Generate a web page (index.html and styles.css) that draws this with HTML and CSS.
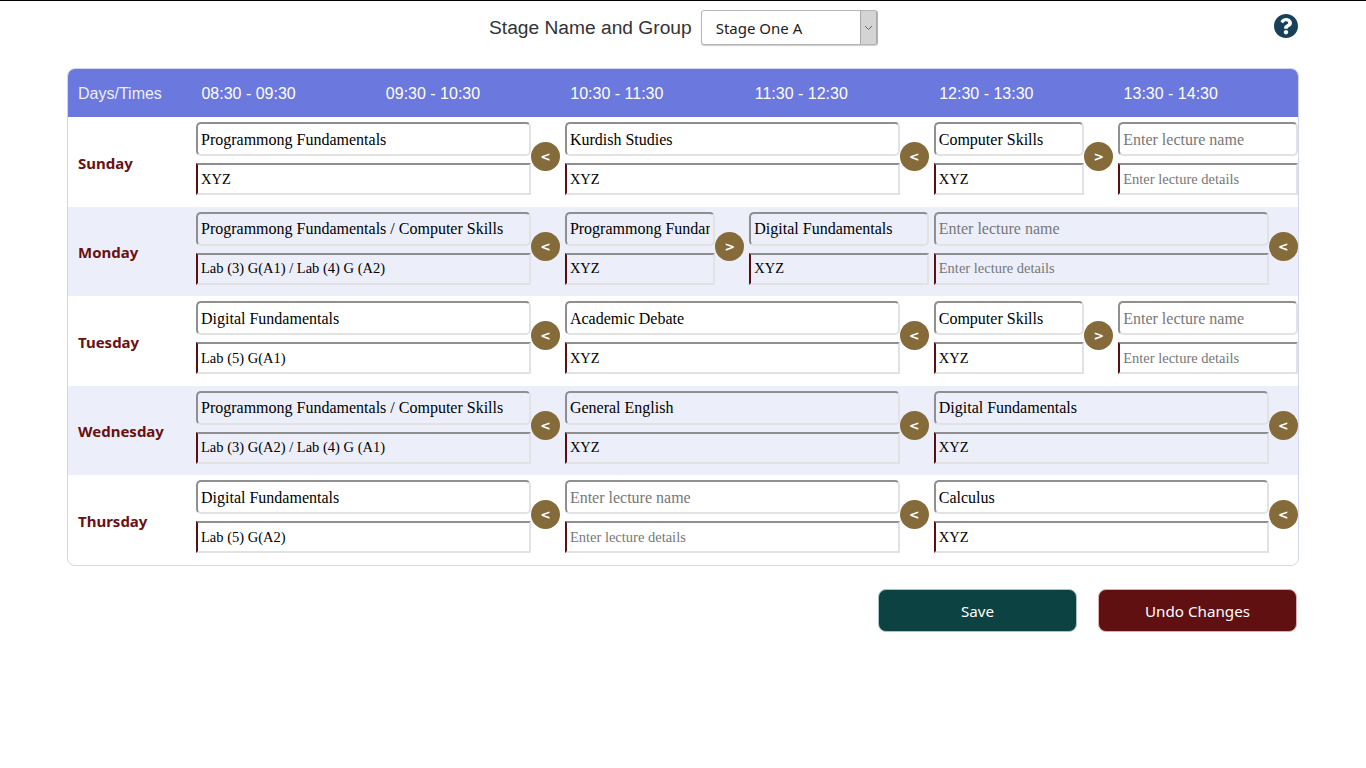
FILE: index.html
```html
<!DOCTYPE html>
<html lang="en">
<head>
    <meta charset="UTF-8">
    <meta name="viewport" content="width=device-width, initial-scale=1.0">
    <title>Schedule</title>
    <link rel="stylesheet" href="styles.css">
</head>
<body>
    <!-- stage picker and help -->
    <div class="topBar">
        <div class="picker">
            <label class="pickerLabel" for="stage">Stage Name and Group</label>
            <div class="selectBox">
                <select id="stage" class="stageSelect">
                    <option>Stage One A</option>
                    <option>Stage One B</option>
                </select>
                <span class="selectArrow">
                    <svg width="9" height="6" viewBox="0 0 9 6"><path d="M1 1l3.5 3.5L8 1" fill="none" stroke="#666" stroke-width="1"/></svg>
                </span>
            </div>
        </div>
        <a class="helpIcon" href="#" aria-label="Help">
            <svg width="24" height="24" viewBox="8 8 496 496"><path fill="#17415a" d="M504 256c0 136.997-111.043 248-248 248S8 392.997 8 256C8 119.083 119.043 8 256 8s248 111.083 248 248zM262.655 90c-54.497 0-89.255 22.957-116.549 63.758-3.536 5.286-2.353 12.415 2.715 16.258l34.699 26.31c5.205 3.947 12.621 3.008 16.665-2.122 17.864-22.658 30.113-35.797 57.303-35.797 20.429 0 45.698 13.148 45.698 32.958 0 14.976-12.363 22.667-32.534 33.976C247.128 238.528 216 254.941 216 296v4c0 6.627 5.373 12 12 12h56c6.627 0 12-5.373 12-12v-1.333c0-28.462 83.186-29.647 83.186-106.667 0-58.002-60.165-102-116.531-102zM256 338c-25.365 0-46 20.635-46 46 0 25.364 20.635 46 46 46s46-20.636 46-46c0-25.365-20.635-46-46-46z"/></svg>
        </a>
    </div>

    <!-- timetable -->
    <div class="schedule">
        <div class="headRow">
            <div class="headDay">Days/Times</div>
            <div class="headTime">08:30 - 09:30</div>
            <div class="headTime">09:30 - 10:30</div>
            <div class="headTime">10:30 - 11:30</div>
            <div class="headTime">11:30 - 12:30</div>
            <div class="headTime">12:30 - 13:30</div>
            <div class="headTime">13:30 - 14:30</div>
        </div>

        <div class="dayRow">
            <div class="dayName">Sunday</div>
            <div class="lecture span2">
                <div class="fields">
                    <input class="lectureName" placeholder="Enter lecture name" value="Programmong Fundamentals">
                    <input class="lectureInfo" placeholder="Enter lecture details" value="XYZ">
                </div>
                <button class="moveBtn">&lt;</button>
            </div>
            <div class="lecture span2">
                <div class="fields">
                    <input class="lectureName" placeholder="Enter lecture name" value="Kurdish Studies">
                    <input class="lectureInfo" placeholder="Enter lecture details" value="XYZ">
                </div>
                <button class="moveBtn">&lt;</button>
            </div>
            <div class="lecture">
                <div class="fields">
                    <input class="lectureName" placeholder="Enter lecture name" value="Computer Skills">
                    <input class="lectureInfo" placeholder="Enter lecture details" value="XYZ">
                </div>
                <button class="moveBtn">&gt;</button>
            </div>
            <div class="lecture">
                <div class="fields">
                    <input class="lectureName" placeholder="Enter lecture name">
                    <input class="lectureInfo" placeholder="Enter lecture details">
                </div>
            </div>
        </div>

        <div class="dayRow">
            <div class="dayName">Monday</div>
            <div class="lecture span2">
                <div class="fields">
                    <input class="lectureName" placeholder="Enter lecture name" value="Programmong Fundamentals / Computer Skills">
                    <input class="lectureInfo" placeholder="Enter lecture details" value="Lab (3) G(A1) / Lab (4) G (A2)">
                </div>
                <button class="moveBtn">&lt;</button>
            </div>
            <div class="lecture">
                <div class="fields">
                    <input class="lectureName" placeholder="Enter lecture name" value="Programmong Fundamentals">
                    <input class="lectureInfo" placeholder="Enter lecture details" value="XYZ">
                </div>
                <button class="moveBtn">&gt;</button>
            </div>
            <div class="lecture">
                <div class="fields">
                    <input class="lectureName" placeholder="Enter lecture name" value="Digital Fundamentals">
                    <input class="lectureInfo" placeholder="Enter lecture details" value="XYZ">
                </div>
            </div>
            <div class="lecture span2">
                <div class="fields">
                    <input class="lectureName" placeholder="Enter lecture name">
                    <input class="lectureInfo" placeholder="Enter lecture details">
                </div>
                <button class="moveBtn">&lt;</button>
            </div>
        </div>

        <div class="dayRow">
            <div class="dayName">Tuesday</div>
            <div class="lecture span2">
                <div class="fields">
                    <input class="lectureName" placeholder="Enter lecture name" value="Digital Fundamentals">
                    <input class="lectureInfo" placeholder="Enter lecture details" value="Lab (5) G(A1)">
                </div>
                <button class="moveBtn">&lt;</button>
            </div>
            <div class="lecture span2">
                <div class="fields">
                    <input class="lectureName" placeholder="Enter lecture name" value="Academic Debate">
                    <input class="lectureInfo" placeholder="Enter lecture details" value="XYZ">
                </div>
                <button class="moveBtn">&lt;</button>
            </div>
            <div class="lecture">
                <div class="fields">
                    <input class="lectureName" placeholder="Enter lecture name" value="Computer Skills">
                    <input class="lectureInfo" placeholder="Enter lecture details" value="XYZ">
                </div>
                <button class="moveBtn">&gt;</button>
            </div>
            <div class="lecture">
                <div class="fields">
                    <input class="lectureName" placeholder="Enter lecture name">
                    <input class="lectureInfo" placeholder="Enter lecture details">
                </div>
            </div>
        </div>

        <div class="dayRow">
            <div class="dayName">Wednesday</div>
            <div class="lecture span2">
                <div class="fields">
                    <input class="lectureName" placeholder="Enter lecture name" value="Programmong Fundamentals / Computer Skills">
                    <input class="lectureInfo" placeholder="Enter lecture details" value="Lab (3) G(A2) / Lab (4) G (A1)">
                </div>
                <button class="moveBtn">&lt;</button>
            </div>
            <div class="lecture span2">
                <div class="fields">
                    <input class="lectureName" placeholder="Enter lecture name" value="General English">
                    <input class="lectureInfo" placeholder="Enter lecture details" value="XYZ">
                </div>
                <button class="moveBtn">&lt;</button>
            </div>
            <div class="lecture span2">
                <div class="fields">
                    <input class="lectureName" placeholder="Enter lecture name" value="Digital Fundamentals">
                    <input class="lectureInfo" placeholder="Enter lecture details" value="XYZ">
                </div>
                <button class="moveBtn">&lt;</button>
            </div>
        </div>

        <div class="dayRow">
            <div class="dayName">Thursday</div>
            <div class="lecture span2">
                <div class="fields">
                    <input class="lectureName" placeholder="Enter lecture name" value="Digital Fundamentals">
                    <input class="lectureInfo" placeholder="Enter lecture details" value="Lab (5) G(A2)">
                </div>
                <button class="moveBtn">&lt;</button>
            </div>
            <div class="lecture span2">
                <div class="fields">
                    <input class="lectureName" placeholder="Enter lecture name">
                    <input class="lectureInfo" placeholder="Enter lecture details">
                </div>
                <button class="moveBtn">&lt;</button>
            </div>
            <div class="lecture span2">
                <div class="fields">
                    <input class="lectureName" placeholder="Enter lecture name" value="Calculus">
                    <input class="lectureInfo" placeholder="Enter lecture details" value="XYZ">
                </div>
                <button class="moveBtn">&lt;</button>
            </div>
        </div>
    </div>

    <div class="actions">
        <button class="actionBtn saveBtn">Save</button>
        <button class="actionBtn undoBtn">Undo Changes</button>
    </div>
</body>
</html>
```

FILE: styles.css
```css
*{
    margin: 0;
    padding: 0;
    box-sizing: border-box;
}

body{
    border-top: 1px solid #000;
    background-color: #fff;
    font-family: "Noto Sans", "Open Sans", sans-serif;
}

.topBar{
    height: 67px;
    padding: 9px 68px 0 489px;
    display: flex;
    justify-content: space-between;
    align-items: flex-start;
}

.picker{
    display: flex;
    align-items: center;
    gap: 9px;
}

.pickerLabel{
    font-family: "Liberation Sans", sans-serif;
    font-size: 19.2px;
    color: #333;
}

.selectBox{
    width: 177px;
    height: 35px;
    display: flex;
    background-color: #fff;
    border: 1px solid #b5b5b5;
    border-radius: 3px;
    box-shadow: 0 1px 1px #ccc;
}

.stageSelect{
    flex: 1;
    min-width: 0;
    appearance: none;
    border: none;
    background: none;
    padding: 0 0 0 14px;
    font-family: "Noto Sans", sans-serif;
    font-size: 15px;
    color: #222;
}

.selectArrow{
    width: 17px;
    display: flex;
    align-items: center;
    justify-content: center;
    background-color: #d4d4d4;
    border-left: 1px solid #a9a9a9;
    border-right: 1px solid #a9a9a9;
}

.helpIcon{
    display: flex;
    margin-top: 4px;
}

.schedule{
    width: 1232px;
    height: 498px;
    margin-left: 67px;
    border: 1px solid #d3d6f2;
    border-radius: 8px;
    overflow: hidden;
}

.headRow,
.dayRow{
    display: grid;
    grid-template-columns: 123px repeat(6, 179.45px);
    column-gap: 5px;
}

.headRow{
    height: 48px;
    padding-top: 2px;
    align-items: center;
    background-color: #6b78dd;
    font-family: "Liberation Sans", sans-serif;
    font-size: 16px;
    color: #fff;
}

.headDay{
    padding-left: 10px;
    color: #eef;
}

.headTime{
    padding-left: 5.4px;
}

.dayRow{
    height: 89.5px;
    padding-top: 5px;
}

.dayRow:nth-child(odd){
    background-color: #eceffa;
}

.dayName{
    padding: 30.5px 0 0 10px;
    font-size: 15px;
    font-weight: 700;
    color: #6b1010;
}

.lecture{
    display: flex;
    align-items: flex-start;
}

.span2{
    grid-column: span 2;
}

.fields{
    flex: 1;
    min-width: 0;
    display: flex;
    flex-direction: column;
    gap: 7px;
}

.lectureName,
.lectureInfo{
    width: 100%;
    padding: 0 3px;
    background: transparent;
    font-family: "Liberation Serif", serif;
    color: #000;
    outline: none;
    border-style: solid;
    border-width: 2px;
    border-color: #8f8f8f #e2e2e2 #e2e2e2 #8f8f8f;
}

.lectureName{
    height: 34px;
    padding-top: 1px;
    font-size: 16px;
    border-radius: 5px;
}

.lectureInfo{
    height: 32px;
    font-size: 14.5px;
    border-left-color: #5a0f12;
}

.lectureName::placeholder,
.lectureInfo::placeholder{
    color: #777;
}

.moveBtn{
    flex: none;
    width: 29px;
    height: 29px;
    margin-top: 20px;
    border: none;
    border-radius: 50%;
    background-color: #866b3a;
    font-family: "DejaVu Sans", sans-serif;
    font-size: 12.5px;
    font-weight: 700;
    color: #fff;
}

.actions{
    display: flex;
    justify-content: flex-end;
    gap: 21px;
    padding: 23px 69px 0 0;
}

.actionBtn{
    width: 199px;
    height: 43px;
    border-radius: 8px;
    font-family: "Noto Sans", sans-serif;
    font-size: 15.2px;
    color: #fff;
}

.saveBtn{
    background-color: #0d4242;
    border: 1px solid #a9c4c4;
}

.undoBtn{
    background-color: #601010;
    border: 1px solid #dcb0b0;
}
```
